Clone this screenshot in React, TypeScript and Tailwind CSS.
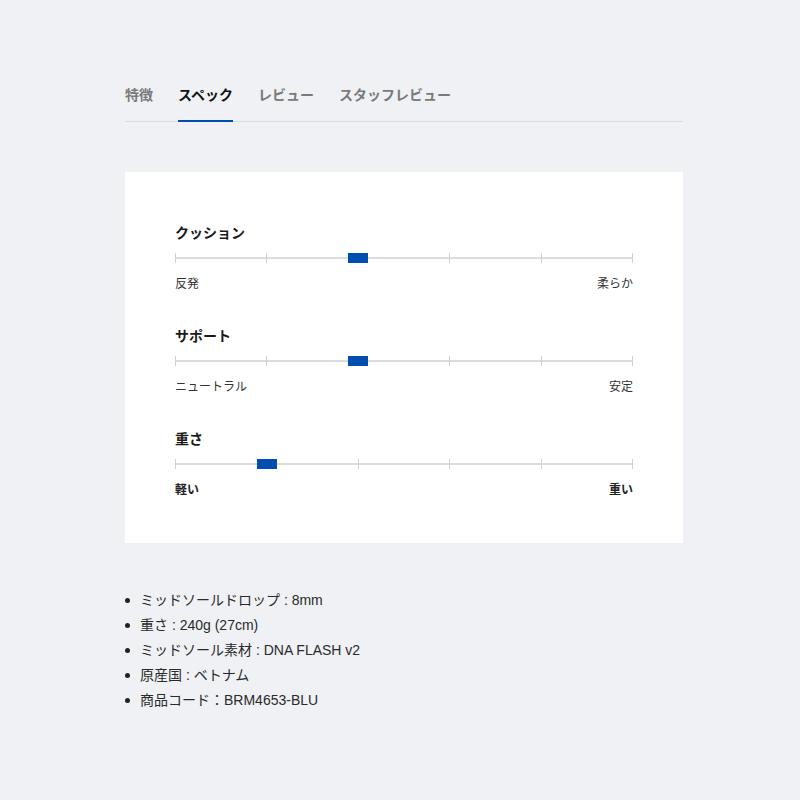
const tabs = ["特徴", "スペック", "レビュー", "スタッフレビュー"];

const specs = [
  { title: "クッション", left: "反発", right: "柔らか", pos: 2 },
  { title: "サポート", left: "ニュートラル", right: "安定", pos: 2 },
  { title: "重さ", left: "軽い", right: "重い", pos: 1, boldLabels: true },
];

const details = [
  "ミッドソールドロップ : 8mm",
  "重さ : 240g (27cm)",
  "ミッドソール素材 : DNA FLASH v2",
  "原産国 : ベトナム",
  "商品コード：BRM4653-BLU",
];

const Scale = ({ pos }: { pos: number }) => {
  return (
    <div className="relative h-[12px] w-full">
      <div className="absolute left-0 right-0 top-[5px] h-[2px] bg-[#dcdcdc]" />
      <div className="absolute inset-0 flex justify-between">
        {[0, 1, 2, 3, 4, 5].map((i) => (
          <div key={i} className="mt-[1px] h-[10px] w-px bg-[#d0d0d0]" />
        ))}
      </div>
      <div
        className="absolute top-[1px] h-[10px] w-[20px] -translate-x-1/2 bg-[#004eae]"
        style={{ left: `${pos * 20}%` }}
      />
    </div>
  );
};

export default function App() {
  return (
    <div
      className="min-h-[800px] bg-[#eff1f4] pt-[84px] text-[#222]"
      style={{ fontFamily: '"Liberation Sans", "Noto Sans CJK JP", sans-serif' }}
    >
      <div className="ml-[125px] w-[558px]">
        <div className="flex gap-[25px] border-b border-[#d9dce1]">
          {tabs.map((t) => (
            <div
              key={t}
              className={
                t === "スペック"
                  ? "-mb-px border-b-2 border-[#004eae] pb-[16px] text-[14px] font-bold leading-[20px] text-[#111]"
                  : "-mb-px border-b-2 border-transparent pb-[16px] text-[14px] font-bold leading-[20px] text-[#7a7a7a]"
              }
              style={{ fontFamily: '"Noto Sans CJK JP", sans-serif' }}
            >
              {t}
            </div>
          ))}
        </div>

        <div className="mt-[50px] flex flex-col gap-[33px] bg-white px-[50px] pb-[45px] pt-[50px]">
          {specs.map((s) => (
            <div key={s.title}>
              <div
                className="text-[14px] font-bold leading-[20px] text-[#1a1a1a]"
                style={{ fontFamily: '"Noto Sans CJK JP", sans-serif' }}
              >
                {s.title}
              </div>
              <div className="mt-[10px]">
                <Scale pos={s.pos} />
              </div>
              <div
                className={
                  s.boldLabels
                    ? "mt-[10px] flex justify-between text-[12px] font-semibold leading-[18px] text-[#222]"
                    : "mt-[10px] flex justify-between text-[12px] leading-[18px] text-[#333]"
                }
                style={{ fontFamily: '"Noto Sans CJK JP", sans-serif' }}
              >
                <span>{s.left}</span>
                <span>{s.right}</span>
              </div>
            </div>
          ))}
        </div>

        <ul className="mt-[45px] flex flex-col">
          {details.map((d) => (
            <li key={d} className="flex items-center gap-[10px] text-[14px] leading-[25px] text-[#2a2a2a]">
              <span className="h-[5px] w-[5px] rounded-full bg-[#222]" />
              <span>{d}</span>
            </li>
          ))}
        </ul>
      </div>
    </div>
  );
}
